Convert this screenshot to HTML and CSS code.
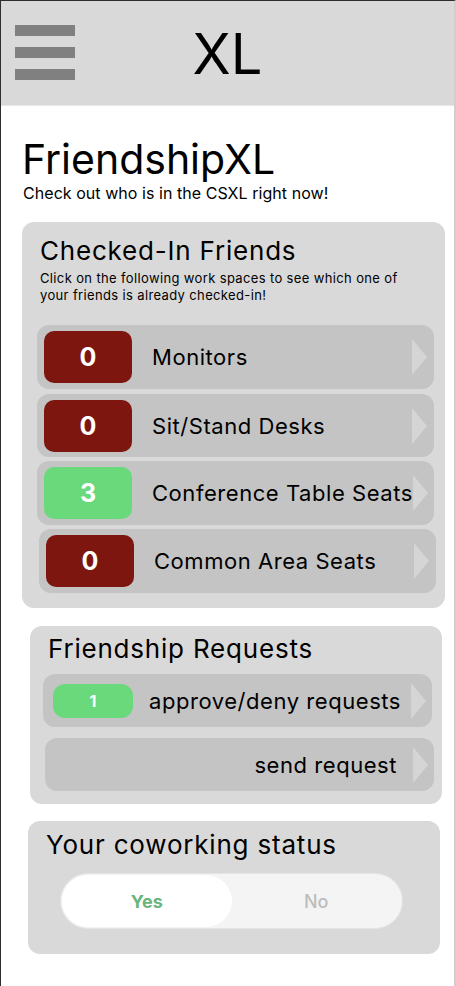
FILE: index.html
```html
<!DOCTYPE html>
<html lang="en">
<head>
<meta charset="utf-8">
<title>FriendshipXL</title>
<link rel="stylesheet" href="styles.css">
</head>
<body>
<div class="frame">
  <header class="topbar">
    <div class="burger"><span></span><span></span><span></span></div>
    <div class="brand">XL</div>
    <div></div>
  </header>
  <main class="main">
    <h1 class="title">FriendshipXL</h1>
    <p class="subtitle">Check out who is in the CSXL right now!</p>

    <section class="card card-friends">
      <h2 class="card-title">Checked-In Friends</h2>
      <p class="card-desc">Click on the following work spaces to see which one of your friends is already checked-in!</p>
      <div class="rows">
        <div class="row"><span class="badge red">0</span><span class="label">Monitors</span><span class="arrow"></span></div>
        <div class="row row-2"><span class="badge red">0</span><span class="label">Sit/Stand Desks</span><span class="arrow"></span></div>
        <div class="row"><span class="badge green">3</span><span class="label">Conference Table Seats</span><span class="arrow"></span></div>
        <div class="row row-shift"><span class="badge red">0</span><span class="label">Common Area Seats</span><span class="arrow"></span></div>
      </div>
    </section>

    <section class="card card-requests">
      <h2 class="card-title">Friendship Requests</h2>
      <div class="req-row"><span class="pill">1</span><span class="req-label">approve/deny requests</span><span class="arrow"></span></div>
      <div class="req-row req-row-2"><span class="req-label">send request</span><span class="arrow"></span></div>
    </section>

    <section class="card card-status">
      <h2 class="card-title">Your coworking status</h2>
      <div class="toggle">
        <span class="seg seg-on">Yes</span>
        <span class="seg seg-off">No</span>
      </div>
    </section>
  </main>
</div>
</body>
</html>
```

FILE: styles.css
```css
* { box-sizing: border-box; }
html, body { margin: 0; padding: 0; background: #ffffff; }
body { font-family: Inter, "Noto Sans", sans-serif; color: #000; }

.frame {
  width: 456px;
  min-height: 986px;
  border-left: 1px solid #2e2e2e;
  border-top: 1px solid #2e2e2e;
  border-right: 2px solid #cfcfcf;
  background: #fff;
}

.topbar {
  height: 105px;
  background: #d9d9d9;
  border-bottom: 1px solid #e8e8e8;
  display: grid;
  grid-template-columns: 1fr auto 1fr;
  align-items: start;
}
.burger {
  display: flex;
  flex-direction: column;
  gap: 11px;
  padding: 24px 0 0 14px;
}
.burger span {
  display: block;
  width: 60px;
  height: 11px;
  background: #808080;
}
.brand {
  font-size: 56px;
  line-height: 56px;
  padding-top: 25px;
  font-weight: 400;
}

.main { padding: 33px 0 0 21px; }
.title {
  margin: 0;
  font-size: 41px;
  line-height: 41px;
  font-weight: 400;
}
.subtitle {
  margin: 4px 0 0 1px;
  font-size: 16px;
  line-height: 18px;
  letter-spacing: 0.05px;
}

.card {
  background: #d9d9d9;
  border-radius: 12px;
}
.card-title {
  margin: 0;
  font-size: 26px;
  line-height: 30px;
  font-weight: 400;
  letter-spacing: 0.8px;
  white-space: nowrap;
}

.card-friends {
  width: 423px;
  margin-top: 20px;
  padding: 14px 11px 15px 15px;
}
.card-friends .card-title { padding-left: 3px; }
.card-desc {
  margin: 4px 0 0 3px;
  max-width: 364px;
  font-size: 13px;
  line-height: 17px;
  letter-spacing: 0.36px;
}
.rows {
  margin-top: 21px;
  display: flex;
  flex-direction: column;
  gap: 4px;
}
.row {
  width: 397px;
  height: 64px;
  background: #c4c4c4;
  border-radius: 12px;
  display: flex;
  align-items: center;
  padding: 0 7px;
}
.row-2 { margin-top: 1px; height: 63px; }
.row-shift { margin-left: 2px; }
.badge {
  width: 88px;
  height: 52px;
  border-radius: 10px;
  display: flex;
  align-items: center;
  justify-content: center;
  color: #fff;
  font-weight: 700;
  font-size: 25px;
  flex: none;
}
.badge.red { background: #7d160f; }
.badge.green { background: #69d97c; }
.label {
  flex: 1;
  margin-left: 20px;
  font-size: 22px;
  letter-spacing: 0.55px;
  white-space: nowrap;
}
.arrow {
  flex: none;
  width: 0;
  height: 0;
  border-left: 15px solid #d5d5d5;
  border-top: 18px solid transparent;
  border-bottom: 18px solid transparent;
}

.card-requests {
  width: 412px;
  margin-left: 8px;
  margin-top: 18px;
  padding: 8px 10px 13px 18px;
}
.req-row {
  width: 389px;
  height: 53px;
  margin-left: -5px;
  margin-top: 10px;
  background: #c4c4c4;
  border-radius: 12px;
  display: flex;
  align-items: center;
  padding: 0 6px 0 10px;
}
.req-row-2 { margin-top: 11px; margin-left: -3px; }
.pill {
  flex: none;
  width: 80px;
  height: 34px;
  border-radius: 12px;
  background: #69d97c;
  color: #fff;
  font-weight: 700;
  font-size: 16px;
  display: flex;
  align-items: center;
  justify-content: center;
}
.req-label {
  flex: 1;
  text-align: right;
  font-size: 22px;
  letter-spacing: 0.55px;
  margin-right: 10px;
  white-space: nowrap;
}
.req-row-2 .req-label { margin-right: 16px; }

.card-status {
  width: 412px;
  margin-left: 6px;
  margin-top: 17px;
  padding: 9px 10px 25px 18px;
}
.toggle {
  margin: 13px 0 0 14px;
  width: 343px;
  height: 56px;
  border: 1px solid #e4e4e4;
  background: #f4f4f4;
  border-radius: 28px;
  padding: 1px;
  display: flex;
}
.seg {
  width: 171px;
  height: 52px;
  border-radius: 26px;
  display: flex;
  align-items: center;
  justify-content: center;
  font-size: 18px;
}
.seg-on {
  background: #fff;
  color: #6ab57c;
  font-weight: 700;
}
.seg-off {
  color: #bdbdbd;
  font-weight: 500;
}
```
